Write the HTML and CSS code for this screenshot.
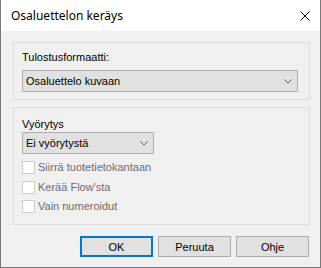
FILE: index.html
```html
<!DOCTYPE html>
<html lang="fi">
<head>
  <meta charset="UTF-8" />
  <title>Osaluettelon keräys</title>
  <link rel="stylesheet" href="styles.css">
</head>
<body>

  <div class="window">
    <header class="titlebar">
      <span class="title">Osaluettelon keräys</span>
      <button class="close" aria-label="Sulje">
        <svg width="10" height="10" viewBox="0 0 10 10"><path d="M0.5 0.5L9.5 9.5M9.5 0.5L0.5 9.5" stroke="#000" stroke-width="1" fill="none"/></svg>
      </button>
    </header>

    <div class="content">
      <section class="group group-format">
        <label class="field-label">Tulostusformaatti:</label>
        <div class="select select-wide">
          <span>Osaluettelo kuvaan</span>
          <svg class="chevron" width="8" height="5" viewBox="0 0 8 5"><path d="M0.5 0.5L4 4L7.5 0.5" stroke="#606060" fill="none"/></svg>
        </div>
      </section>

      <section class="group group-alloc">
        <label class="field-label">Vyörytys</label>
        <div class="select select-narrow">
          <span>Ei vyörytystä</span>
          <svg class="chevron" width="8" height="5" viewBox="0 0 8 5"><path d="M0.5 0.5L4 4L7.5 0.5" stroke="#606060" fill="none"/></svg>
        </div>
        <ul class="checks">
          <li><span class="box"></span>Siirrä tuotetietokantaan</li>
          <li><span class="box"></span>Kerää Flow'sta</li>
          <li><span class="box"></span>Vain numeroidut</li>
        </ul>
      </section>

      <footer class="buttons">
        <button class="btn default">OK</button>
        <button class="btn">Peruuta</button>
        <button class="btn">Ohje</button>
      </footer>
    </div>
  </div>

</body>
</html>
```

FILE: styles.css
```css
/* Reset */
* {
  margin: 0; padding: 0; box-sizing: border-box;
}

body {
  width: 321px;
  height: 268px;
  font-family: 'Liberation Sans', Arial, sans-serif;
  font-size: 11px;
  color: #000;
  background: #fff;
}

/* Window frame */
.window {
  width: 321px;
  height: 268px;
  border: 1px solid #7a7a7a;
  border-top: none;
  background: #f0f0f0;
  display: flex;
  flex-direction: column;
}

.titlebar {
  height: 31px;
  background: #fff;
  display: flex;
  align-items: center;
  justify-content: space-between;
  padding-left: 10px;
}
.titlebar .title {
  font-family: 'Noto Sans', sans-serif;
  font-size: 12px;
}
.titlebar .close {
  width: 30px;
  height: 31px;
  border: none;
  background: transparent;
  display: flex;
  align-items: center;
  justify-content: center;
}

/* Content */
.content {
  flex: 1;
  padding: 11px 10px 10px 12px;
  display: flex;
  flex-direction: column;
}

.group {
  border: 1px solid #dcdcdc;
  padding: 8px 11px 0 8px;
  display: flex;
  flex-direction: column;
  align-items: flex-start;
}
.group-format {
  height: 58px;
  margin-bottom: 7px;
}
.group-alloc {
  height: 118px;
  padding-top: 10px;
}

.field-label {
  line-height: 13px;
  height: 13px;
}
.group-format .field-label {
  margin-bottom: 6px;
}

/* Combo boxes */
.select {
  height: 22px;
  background: #e1e1e1;
  border: 1px solid #adadad;
  display: flex;
  align-items: center;
  justify-content: space-between;
  padding: 0 5px 0 3px;
}
.select-wide {
  width: 276px;
}
.select-narrow {
  width: 132px;
  margin-top: 1px;
}
.chevron {
  display: block;
}

/* Disabled check boxes */
.checks {
  list-style: none;
  margin-top: 7px;
}
.checks li {
  height: 19.5px;
  display: flex;
  align-items: flex-start;
  color: #6d6d6d;
  line-height: 13px;
}
.checks .box {
  width: 13px;
  height: 13px;
  border: 1px solid #cccccc;
  background: #fff;
  margin-right: 3px;
}

/* Dialog buttons */
.buttons {
  margin-top: 11px;
  display: flex;
  justify-content: flex-end;
  gap: 5px;
  padding-right: 1px;
}
.btn {
  width: 73px;
  height: 21px;
  background: #e1e1e1;
  border: 1px solid #adadad;
  font-family: 'Liberation Sans', Arial, sans-serif;
  font-size: 11px;
  color: #000;
}
.btn.default {
  border: 2px solid #0078d7;
}
```
